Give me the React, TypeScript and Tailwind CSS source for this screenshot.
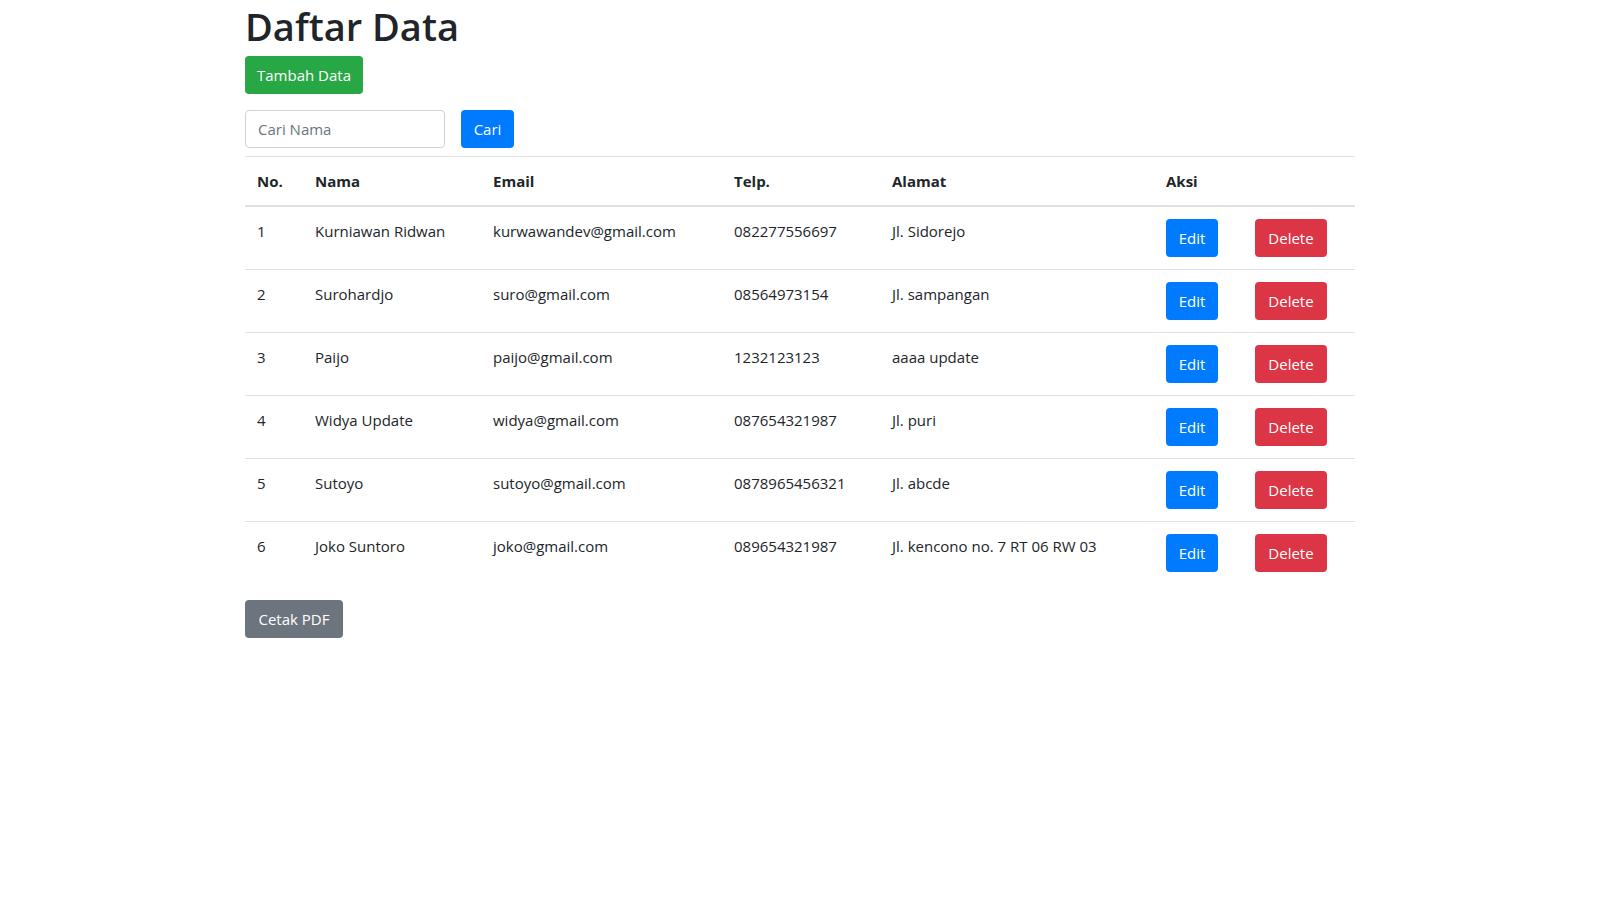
import React from 'react';

type Row = {
  no: number;
  nama: string;
  email: string;
  telp: string;
  alamat: string;
};

const rows: Row[] = [
  { no: 1, nama: 'Kurniawan Ridwan', email: 'kurwawandev@gmail.com', telp: '082277556697', alamat: 'Jl. Sidorejo' },
  { no: 2, nama: 'Surohardjo', email: 'suro@gmail.com', telp: '08564973154', alamat: 'Jl. sampangan' },
  { no: 3, nama: 'Paijo', email: 'paijo@gmail.com', telp: '1232123123', alamat: 'aaaa update' },
  { no: 4, nama: 'Widya Update', email: 'widya@gmail.com', telp: '087654321987', alamat: 'Jl. puri' },
  { no: 5, nama: 'Sutoyo', email: 'sutoyo@gmail.com', telp: '0878965456321', alamat: 'Jl. abcde' },
  { no: 6, nama: 'Joko Suntoro', email: 'joko@gmail.com', telp: '089654321987', alamat: 'Jl. kencono no. 7 RT 06 RW 03' },
];

const App: React.FC = () => {
  return (
    <div className="min-h-screen bg-white text-[#212529] font-['Open_Sans',sans-serif] text-[15px] leading-6">
      <div className="w-[1110px] mx-auto">
        <h1 className="text-[38px] leading-[48px] font-semibold mb-2 pt-[2px] h-[48px] box-border">Daftar Data</h1>

        <button className="h-[38px] w-[118px] rounded bg-[#28a745] text-white">Tambah Data</button>

        <form className="flex items-center gap-4 mt-4 mb-2" onSubmit={(e) => e.preventDefault()}>
          <input
            type="text"
            placeholder="Cari Nama"
            className="h-[38px] w-[200px] px-3 rounded border border-[#ced4da] placeholder:text-[#6c757d] outline-none"
          />
          <button className="h-[38px] w-[53px] rounded bg-[#007bff] text-white">Cari</button>
        </form>

        <table className="w-full table-fixed border-collapse mb-4">
          <colgroup>
            <col className="w-[58px]" />
            <col className="w-[178px]" />
            <col className="w-[241px]" />
            <col className="w-[158px]" />
            <col className="w-[274px]" />
            <col className="w-[89px]" />
            <col className="w-[112px]" />
          </colgroup>
          <thead>
            <tr className="text-left font-bold">
              <th className="p-3 border-t border-b-2 border-[#dee2e6]">No.</th>
              <th className="p-3 border-t border-b-2 border-[#dee2e6]">Nama</th>
              <th className="p-3 border-t border-b-2 border-[#dee2e6]">Email</th>
              <th className="p-3 border-t border-b-2 border-[#dee2e6]">Telp.</th>
              <th className="p-3 border-t border-b-2 border-[#dee2e6]">Alamat</th>
              <th colSpan={2} className="p-3 border-t border-b-2 border-[#dee2e6]">Aksi</th>
            </tr>
          </thead>
          <tbody>
            {rows.map((r) => (
              <tr key={r.no} className="align-top border-t border-[#dee2e6]">
                <td className="p-3">{r.no}</td>
                <td className="p-3 whitespace-nowrap">{r.nama}</td>
                <td className="p-3 whitespace-nowrap">{r.email}</td>
                <td className="p-3 whitespace-nowrap">{r.telp}</td>
                <td className="p-3 whitespace-nowrap">{r.alamat}</td>
                <td className="p-3">
                  <button className="h-[38px] w-[52px] rounded bg-[#007bff] text-white">Edit</button>
                </td>
                <td className="p-3">
                  <button className="h-[38px] w-[72px] rounded bg-[#dc3545] text-white">Delete</button>
                </td>
              </tr>
            ))}
          </tbody>
        </table>

        <button className="h-[38px] w-[98px] rounded bg-[#6c757d] text-white">Cetak PDF</button>
      </div>
    </div>
  );
};

export default App;
